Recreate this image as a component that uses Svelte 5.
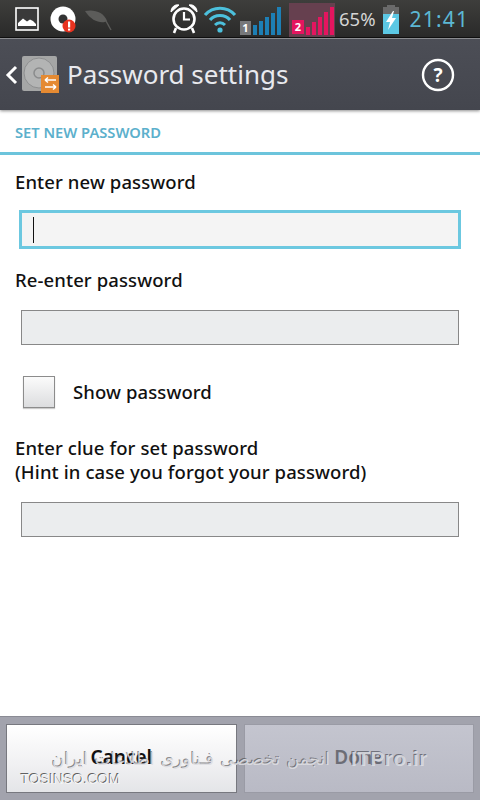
<script>
	const bars1 = [10, 14, 18, 22, 28];
	const bars2 = [8, 13, 18, 23, 28];
</script>

<div class="phone">
	<!-- Status bar -->
	<header class="status">
		<div class="status-left">
			<svg class="ic-pic" width="24" height="24" viewBox="0 0 24 24">
				<rect x="1" y="1" width="22" height="22" fill="#3a3a3a" stroke="#fff" stroke-width="1.6" />
				<path d="M3 19 L3 16 L8 11.5 L12 14.5 L15 12.5 L18 14 L21 17 L21 19 Z" fill="#fff" />
			</svg>
			<svg class="ic-disc" width="28" height="30" viewBox="0 0 28 30">
				<circle cx="13" cy="13" r="12.5" fill="#fff" />
				<circle cx="13" cy="13" r="4.5" fill="#333" />
				<circle cx="19" cy="20" r="6.5" fill="#e8321f" />
				<rect x="18" y="15.5" width="2.2" height="6" fill="#fff" />
				<rect x="18" y="22.6" width="2.2" height="2" fill="#fff" />
			</svg>
			<svg class="ic-leaf" width="28" height="22" viewBox="0 0 28 22">
				<path d="M1 1 C10 -1 20 2 23 11 C18 14 8 12 1 1 Z" fill="#5c5c5a" />
				<path d="M22 11 L27 20" stroke="#5c5c5a" stroke-width="1.4" fill="none" />
			</svg>
			<span class="spacer"></span>
			<svg class="ic-alarm" width="28" height="32" viewBox="0 0 28 32">
				<circle cx="14" cy="16" r="10.5" fill="none" stroke="#fff" stroke-width="2.6" />
				<path d="M14 9 V16.5 H20" fill="none" stroke="#fff" stroke-width="2.2" />
				<path d="M1 9 C1 4 5 1 9 2 Z M27 9 C27 4 23 1 19 2 Z" fill="#fff" stroke="#fff" />
				<path d="M6 25 L4 30 M22 25 L24 30" stroke="#fff" stroke-width="2.6" />
			</svg>
			<svg class="ic-wifi" width="34" height="28" viewBox="0 0 34 28">
				<path d="M2 10 C10 1 24 1 32 10" fill="none" stroke="#4cc0dc" stroke-width="3.2" />
				<path d="M7 15 C12 9 22 9 27 15" fill="none" stroke="#4cc0dc" stroke-width="3.2" />
				<path d="M12 20 C15 17 19 17 22 20" fill="none" stroke="#4cc0dc" stroke-width="3" />
				<circle cx="17" cy="25" r="2.6" fill="#4cc0dc" />
			</svg>
		</div>
		<div class="sim">
			<span class="sim-num one">1</span>
			<div class="bars blue">
				{#each bars1 as h}
					<i style="height: {h}px"></i>
				{/each}
			</div>
		</div>
		<div class="sim two">
			<span class="sim-num two-num">2</span>
			<div class="bars pink">
				{#each bars2 as h}
					<i style="height: {h}px"></i>
				{/each}
			</div>
		</div>
		<span class="pct">65%</span>
		<svg class="ic-batt" width="18" height="30" viewBox="0 0 18 30">
			<rect x="5" y="0" width="8" height="3" fill="#6a6a6a" />
			<rect x="1" y="2" width="16" height="7" fill="#6a6a6a" />
			<rect x="1" y="9" width="16" height="20" fill="#5cc8e4" />
			<path d="M11 6 L4 17 H8 L6 25 L14 13 H10 L12 6 Z" fill="#fff" />
		</svg>
		<span class="clock">21:41</span>
	</header>

	<!-- Title bar -->
	<div class="titlebar">
		<svg class="chev" width="14" height="20" viewBox="0 0 14 20">
			<path d="M11 2 L3 10 L11 18" fill="none" stroke="#fff" stroke-width="3" />
		</svg>
		<div class="app-icon">
			<svg width="38" height="38" viewBox="0 0 38 38">
				<rect x="1" y="1" width="35" height="35" rx="2" fill="#a5a6a6" />
				<circle cx="18" cy="18" r="15" fill="#b3b4b4" stroke="#8e8f90" />
				<circle cx="18" cy="18" r="5" fill="none" stroke="#8a8b8c" stroke-width="1.5" />
				<rect x="20" y="20" width="18" height="18" fill="#e58a32" />
				<path d="M24 25 H35 M24 25 L27 22.5 M24 25 L27 27.5 M35 32 H24 M35 32 L32 29.5 M35 32 L32 34.5" stroke="#fff" stroke-width="1.6" fill="none" />
			</svg>
		</div>
		<h1>Password settings</h1>
		<svg class="help" width="34" height="34" viewBox="0 0 34 34">
			<circle cx="17" cy="17" r="15" fill="none" stroke="#fff" stroke-width="2.4" />
			<text x="17" y="23.5" text-anchor="middle" class="help-q">?</text>
		</svg>
	</div>

	<!-- Form -->
	<main class="content">
		<div class="section-head">SET NEW PASSWORD</div>

		<div class="form">
			<label class="lbl first">Enter new password</label>
			<div class="input focused"><span class="caret"></span></div>

			<label class="lbl second">Re-enter password</label>
			<div class="input pw2"></div>

			<div class="check-row">
				<div class="checkbox"></div>
				<span class="lbl">Show password</span>
			</div>

			<div class="lbl clue">Enter clue for set password<br />(Hint in case you forgot your password)</div>
			<div class="input"></div>
		</div>
	</main>

	<!-- Bottom buttons -->
	<footer class="actions">
		<button class="btn">Cancel</button>
		<button class="btn disabled">Done</button>
	</footer>

	<!-- Watermark burned into the screenshot -->
	<div class="wm-fa" dir="rtl">انجمن تخصصی فـناوری اطلاعات ایران</div>
	<div class="wm-it">ITPro.ir</div>
	<div class="wm-site">TOSINSO.COM</div>
</div>

<style>
	:global(body) {
		margin: 0;
	}

	.phone {
		position: relative;
		width: 480px;
		height: 800px;
		overflow: hidden;
		background: #fff;
		font-family: "Noto Sans", sans-serif;
		display: flex;
		flex-direction: column;
	}

	/* status bar */
	.status {
		box-sizing: border-box;
		border-bottom: 1px solid #111;
		background: linear-gradient(#3e3e3c, #2a2a29);
		display: flex;
		align-items: center;
		padding-right: 10px;
		flex: none;
		height: 38px;
	}

	.status-left {
		display: flex;
		align-items: center;
		width: 240px;
		padding-left: 15px;
		box-sizing: border-box;
		flex: none;
	}

	.ic-disc {
		margin-left: 11px;
		margin-top: 4px;
	}

	.ic-leaf {
		margin-left: 6px;
		margin-top: 4px;
	}

	.spacer {
		flex: 1;
	}

	.ic-alarm {
		margin-right: 5px;
	}

	.ic-wifi {
		margin-right: 3px;
	}

	.sim {
		position: relative;
		display: flex;
		align-items: flex-end;
		height: 32px;
		width: 43px;
		flex: none;
	}

	.sim.two {
		width: 46px;
		margin-left: 6px;
		background: #66404f;
		height: 34px;
		margin-top: 2px;
		box-sizing: border-box;
		padding-bottom: 2px;
	}

	.sim-num {
		font-size: 11px;
		font-weight: 700;
		color: #fff;
		text-align: center;
		line-height: 14px;
		width: 11px;
		height: 14px;
		flex: none;
	}

	.one {
		background: #77787a;
	}

	.two-num {
		background: #e5155f;
		width: 12px;
		margin-left: 3px;
		margin-bottom: 1px;
	}

	.bars {
		display: flex;
		align-items: flex-end;
		gap: 2px;
		margin-left: 2px;
	}

	.bars i {
		display: block;
		width: 4px;
	}

	.blue i {
		background: #1d7fb5;
	}

	.pink i {
		background: #e5155f;
	}

	.pct {
		color: #d5d5d5;
		font-size: 18.5px;
		margin-left: 4px;
	}

	.ic-batt {
		margin-left: 6px;
		margin-top: 3px;
		flex: none;
	}

	.clock {
		color: #5cb8d4;
		font-size: 21px;
		margin-left: 10px;
		letter-spacing: 1.2px;
	}

	/* title bar */
	.titlebar {
		height: 72px;
		flex: none;
		background: linear-gradient(#4c4e56, #44464e);
		display: flex;
		align-items: center;
		padding-left: 5px;
		box-shadow: 0 1px 3px rgba(0, 0, 0, 0.45);
		position: relative;
		border-top: 1px solid #8a8b8f;
		box-sizing: border-box;
	}

	.app-icon {
		margin: -2px 0 0 2px;
		height: 38px;
	}

	h1 {
		margin: -2px 0 0 8px;
		font-size: 26px;
		font-weight: 400;
		color: #e8e9ee;
		flex: 1;
	}

	.help {
		margin-right: 25px;
	}

	.help-q {
		font-size: 19px;
		font-weight: 700;
		fill: #fff;
		font-family: "Noto Sans", sans-serif;
	}

	/* form */
	.content {
		flex: 1;
	}

	.section-head {
		height: 45px;
		box-sizing: border-box;
		padding: 13px 0 0 15px;
		font-size: 14.7px;
		line-height: 19px;
		font-weight: 600;
		color: #5cb0cc;
		border-bottom: 3px solid #6cc4dc;
	}

	.form {
		padding: 0 21px 0 15px;
	}

	.lbl {
		display: block;
		font-size: 18.5px;
		line-height: 24px;
		font-weight: 500;
		letter-spacing: 0.1px;
		color: #111;
	}

	.first {
		margin-top: 15px;
	}

	.second {
		margin-top: 19px;
	}

	.input {
		margin: 16px 0 0 6px;
		height: 35px;
		box-sizing: border-box;
		border: 1px solid #888;
		background: #ebedee;
	}

	.pw2 {
		margin-top: 18px;
	}

	.focused {
		margin: 16px -2px 0 4px;
		height: 39px;
		border: 3px solid #6cc8e0;
		background: #f4f4f4;
		display: flex;
		align-items: center;
		padding-left: 11px;
	}

	.caret {
		width: 1px;
		height: 26px;
		background: #111;
	}

	.check-row {
		display: flex;
		align-items: center;
		margin: 31px 0 0 8px;
		gap: 18px;
	}

	.checkbox {
		width: 32px;
		height: 32px;
		box-sizing: border-box;
		border: 1px solid #8c8c8c;
		background: linear-gradient(#fbfbfb, #dcdddf);
		box-shadow: 0 1px 1px rgba(0, 0, 0, 0.2);
	}

	.clue {
		margin-top: 28px;
	}

	.clue + .input {
		margin-top: 18px;
	}

	/* bottom buttons */
	.actions {
		height: 84px;
		flex: none;
		box-sizing: border-box;
		background: #a2a3ad;
		border-top: 1px solid #8a8b94;
		padding: 7px 6px;
		display: flex;
		gap: 7px;
	}

	.btn {
		flex: 1;
		border: 1px solid #77787f;
		background: linear-gradient(#ffffff, #f0f0f2 60%, #e4e5e8);
		font-family: "Noto Sans", sans-serif;
		font-size: 19px;
		font-weight: 600;
		color: #111;
		padding: 0 0 4px;
	}

	.disabled {
		background: linear-gradient(#c4c5cf, #b9bac5);
		border-color: #9a9ba5;
		color: #6c6d76;
	}

	/* watermark */
	.wm-fa {
		position: absolute;
		left: 52px;
		top: 746px;
		width: 278px;
		font-family: "DejaVu Sans", sans-serif;
		font-size: 17px;
		line-height: 26px;
		white-space: nowrap;
		color: rgba(222, 222, 226, 0.9);
		text-shadow: -1px -1px 0 rgba(70, 70, 70, 0.6);
		text-align: justify;
		text-align-last: justify;
	}

	.wm-it {
		position: absolute;
		left: 351px;
		top: 746px;
		font-family: "Liberation Sans", sans-serif;
		font-size: 21px;
		line-height: 26px;
		font-weight: 700;
		letter-spacing: 0.4px;
		color: rgba(220, 222, 228, 0.9);
		text-shadow: -1px -1px 0 rgba(60, 60, 70, 0.6);
	}

	.wm-site {
		position: absolute;
		left: 21px;
		top: 770px;
		font-family: "Liberation Sans", sans-serif;
		font-size: 14px;
		line-height: 18px;
		color: #f4f4f4;
		text-shadow: -1px -1px 0 rgba(50, 50, 50, 0.75);
	}
</style>
